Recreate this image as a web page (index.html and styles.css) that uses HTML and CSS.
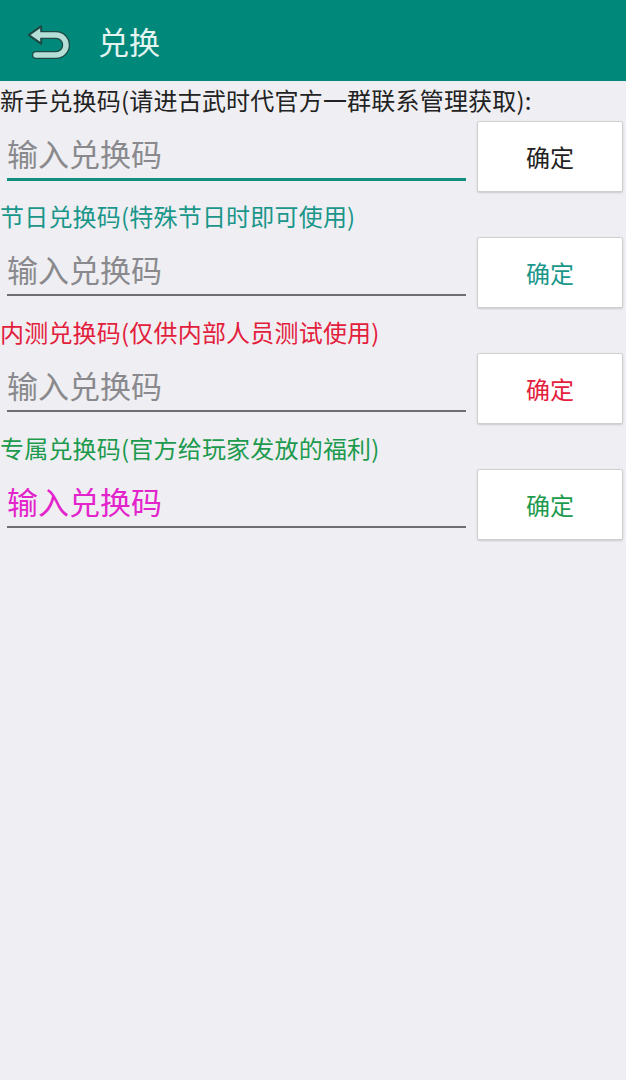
FILE: index.html
```html
<!DOCTYPE html>
<html lang="zh">
<head>
<meta charset="utf-8">
<title>兑换</title>
<link rel="stylesheet" href="styles.css">
</head>
<body>
<header class="appbar">
  <svg class="back" width="50" height="44" viewBox="0 0 50 44">
    <path d="M16 15 H32 A10 10 0 0 1 32 35 H12" fill="none" stroke="#1d4a44" stroke-width="8" stroke-linecap="round" stroke-linejoin="round"/>
    <path d="M5 15 L17 6.5 L17 23.5 Z" fill="#1d4a44" stroke="#1d4a44" stroke-width="2.5" stroke-linejoin="round"/>
    <path d="M16 15 H32 A10 10 0 0 1 32 35 H12" fill="none" stroke="#b5ded7" stroke-width="5.5" stroke-linecap="round" stroke-linejoin="round"/>
    <path d="M6.5 15 L16.2 8.3 L16.2 21.7 Z" fill="#b5ded7"/>
  </svg>
  <h1 class="title">兑换</h1>
</header>
<main>
  <section class="block">
    <div class="label label-black">新手兑换码(请进古武时代官方一群联系管理获取):</div>
    <div class="row">
      <input class="code code-focus" type="text" placeholder="输入兑换码">
      <button class="ok ok-black">确定</button>
    </div>
  </section>
  <section class="block">
    <div class="label label-teal">节日兑换码(特殊节日时即可使用)</div>
    <div class="row">
      <input class="code" type="text" placeholder="输入兑换码">
      <button class="ok ok-teal">确定</button>
    </div>
  </section>
  <section class="block">
    <div class="label label-red">内测兑换码(仅供内部人员测试使用)</div>
    <div class="row">
      <input class="code" type="text" placeholder="输入兑换码">
      <button class="ok ok-red">确定</button>
    </div>
  </section>
  <section class="block">
    <div class="label label-green">专属兑换码(官方给玩家发放的福利)</div>
    <div class="row">
      <input class="code code-magenta" type="text" placeholder="输入兑换码">
      <button class="ok ok-green">确定</button>
    </div>
  </section>
</main>
</body>
</html>
```

FILE: styles.css
```css
* { box-sizing: border-box; }
html, body {
  margin: 0;
  padding: 0;
  height: 100%;
}
body {
  background: #efeff3;
  font-family: "Noto Sans CJK SC", "Noto Sans", sans-serif;
  width: 626px;
}
.appbar {
  height: 81px;
  background: #00897b;
  display: flex;
  align-items: center;
  padding-left: 24px;
}
.back {
  display: block;
  margin-top: 3px;
}
.title {
  margin: 0 0 0 24px;
  font-size: 31px;
  font-weight: normal;
  color: #e4f4f1;
  line-height: 1;
}
main {
  display: flex;
  flex-direction: column;
  margin-top: -1px;
}
.block {
  display: flex;
  flex-direction: column;
}
.label {
  height: 40px;
  line-height: 40px;
  font-size: 24px;
  letter-spacing: 0.2px;
  white-space: nowrap;
}
.label-black { color: #222222; }
.label-teal { color: #1a968a; }
.label-red { color: #e3203c; }
.label-green { color: #1d9a4e; }
.row {
  height: 76px;
  display: flex;
  align-items: flex-start;
  padding-left: 7px;
  padding-right: 3px;
}
.code {
  width: 459px;
  height: 48px;
  margin-top: 12px;
  padding: 0 0 5px 0;
  border: none;
  border-bottom: 2px solid #6f6f73;
  background: transparent;
  font-family: "Noto Sans CJK SC", sans-serif;
  font-size: 31px;
  color: #333;
  outline: none;
}
.code::placeholder { color: #8a8a8e; }
.code-focus { border-bottom: 3px solid #12907f; height: 49px; }
.code-magenta::placeholder { color: #e324cc; }
.ok {
  margin-left: auto;
  margin-top: 1px;
  width: 146px;
  height: 71px;
  background: #ffffff;
  border: 1px solid #cfcfd2;
  border-radius: 2px;
  box-shadow: 0 1px 2px rgba(0,0,0,0.15);
  font-family: "Noto Sans CJK SC", sans-serif;
  font-size: 24px;
  padding: 0;
}
.ok-black { color: #222222; }
.ok-teal { color: #1a968a; }
.ok-red { color: #e3203c; }
.ok-green { color: #1d9a4e; }
```
